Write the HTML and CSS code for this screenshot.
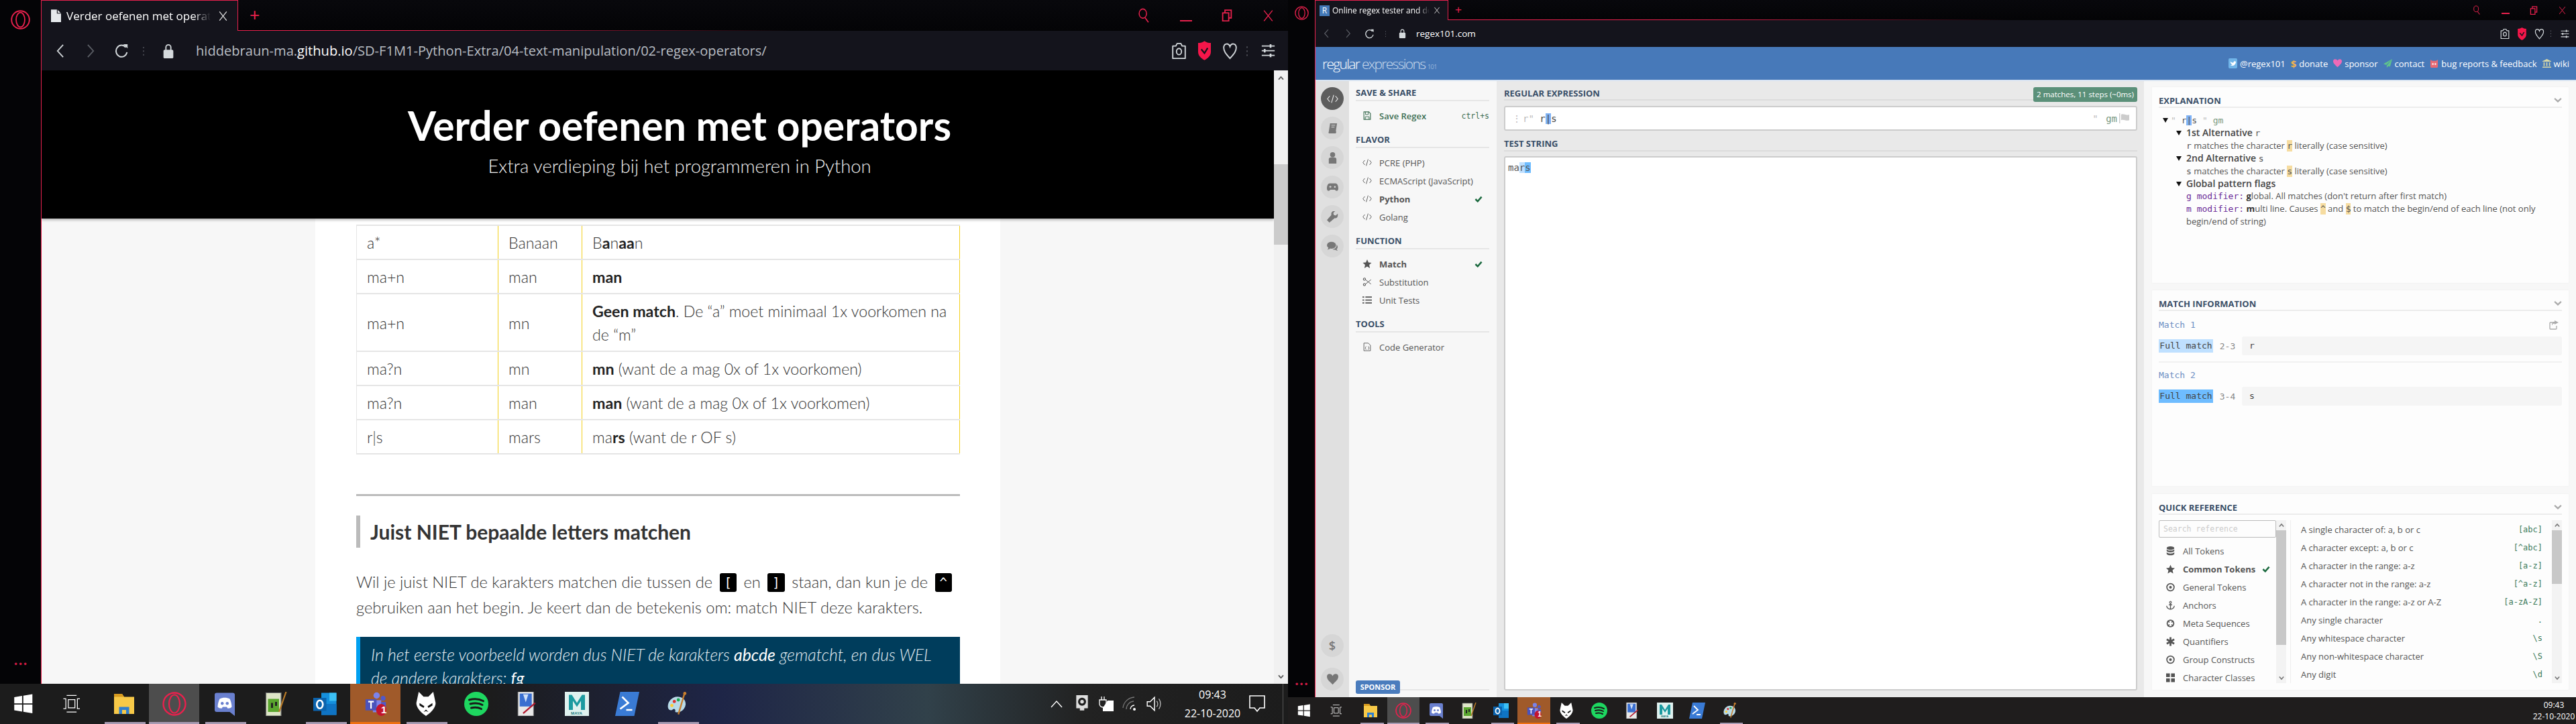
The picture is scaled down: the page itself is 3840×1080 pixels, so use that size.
FILE: index.html
```html
<!DOCTYPE html>
<html lang="en">
<head>
    <meta charset="UTF-8">
    <title>Two browser windows</title>
    <link rel="stylesheet" href="styles.css">
</head>
<body>
    <svg class="sprite" width="0" height="0">
        <symbol id="opera" viewBox="0 0 36 36"><ellipse cx="18" cy="18" rx="16.5" ry="16.5" fill="none" stroke="currentColor" stroke-width="2.4"/><ellipse cx="18" cy="18" rx="8" ry="13.5" fill="none" stroke="currentColor" stroke-width="2.2"/></symbol>
        <symbol id="doc" viewBox="0 0 16 20"><path d="M0 0h10l6 6v14H0z" fill="currentColor"/><path d="M10 0v6h6" fill="none" stroke="#14141c" stroke-width="1.2"/></symbol>
        <symbol id="back" viewBox="0 0 14 24"><path d="M12 2 3 12l9 10" fill="none" stroke="currentColor" stroke-width="2"/></symbol>
        <symbol id="forward" viewBox="0 0 14 24"><path d="m2 2 9 10-9 10" fill="none" stroke="currentColor" stroke-width="2"/></symbol>
        <symbol id="reload" viewBox="0 0 22 24"><path d="M17 6a9 9.500 0 1 0 2 8" fill="none" stroke="currentColor" stroke-width="2.200"/><path d="M13 1h7v7z" fill="currentColor"/></symbol>
        <symbol id="vdots" viewBox="0 0 4 24"><path d="M2 3v3M2 11v3M2 19v3" stroke="currentColor" stroke-width="2"/></symbol>
        <symbol id="lock" viewBox="0 0 16 24"><path d="M4 11V6a4 4 0 0 1 8 0v5" fill="none" stroke="currentColor" stroke-width="2"/><rect x="0" y="10" width="16" height="14" rx="2" fill="currentColor"/></symbol>
        <symbol id="camera" viewBox="0 0 24 28"><path d="M2 6h5l2-4h6l2 4h5v20H2z" fill="none" stroke="currentColor" stroke-width="2" stroke-linejoin="round"/><ellipse cx="12" cy="15" rx="4" ry="5" fill="none" stroke="currentColor" stroke-width="2"/></symbol>
        <symbol id="shield" viewBox="0 0 20 30"><path d="M10 0c3 2 6 3 10 3v14c0 6-5 10-10 13C5 27 0 23 0 17V3c4 0 7-1 10-3z" fill="#f5164a"/><path d="m5 13 5 6 5-8" fill="none" stroke="#14141c" stroke-width="2.400"/></symbol>
        <symbol id="heart" viewBox="0 0 24 28"><path d="M12 26C6 19 2 15 2 9c0-8 8-8 10-2 2-6 10-6 10 2 0 6-4 10-10 17z" fill="none" stroke="currentColor" stroke-width="2"/></symbol>
        <symbol id="sliders" viewBox="0 0 24 24"><path d="M1 4h22M1 12h22M1 20h22" stroke="currentColor" stroke-width="2"/><path d="M16 1v6M6 9v6M16 17v6" stroke="currentColor" stroke-width="3"/></symbol>
        <symbol id="search" viewBox="0 0 24 32"><ellipse cx="10" cy="12" rx="8" ry="10" fill="none" stroke="currentColor" stroke-width="2.200"/><path d="m15 21 7 10" stroke="currentColor" stroke-width="2.400"/></symbol>
        <symbol id="restore" viewBox="0 0 20 24"><rect x="1.500" y="7" width="12" height="16" fill="none" stroke="currentColor" stroke-width="2.400"/><path d="M6 7V1.500h12.500V17H14" fill="none" stroke="currentColor" stroke-width="2.400"/></symbol>
        <symbol id="close" viewBox="0 0 20 24"><path d="m2 2 16 20M18 2 2 22" stroke="currentColor" stroke-width="1.800"/></symbol>

        <symbol id="t-win" viewBox="0 0 24 24"><path d="M1 4 10.500 2.500v9H1zM12 2.300 23 .5v11H12zM1 13h9.500v8.500L1 20zM12 13h11v10.500l-11-1.800z" fill="#fff"/></symbol>
        <symbol id="t-view" viewBox="0 0 24 24"><path d="M6 2h12M6 22h12M2 6h3v12H2M22 6h-3v12h3M8 7h8v10H8z" fill="none" stroke="#fff" stroke-width="1"/></symbol>
        <symbol id="t-folder" viewBox="0 0 24 24"><path d="M2 2h8l2 3h10v17H2z" fill="#f7c948"/><path d="M2 2h8l2 3H2z" fill="#d69a1f"/><path d="M7 22v-7h10v7h-3v-4h-4v4z" fill="#2f7fd0"/></symbol>
        <symbol id="t-discord" viewBox="0 0 24 24"><path d="M4 1h16a2 2 0 0 1 2 2v21l-5-4H4a2 2 0 0 1-2-2V3a2 2 0 0 1 2-2z" fill="#6a80cf"/><path d="M7 7c3-1.500 7-1.500 10 0 1 2 2 5 2 8-1 1-2 1.500-4 1.500l-1-1.500h-4l-1 1.500c-2 0-3-.5-4-1.500 0-3 1-6 2-8z" fill="#fff"/><circle cx="9.500" cy="11.500" r="1.500" fill="#6a80cf"/><circle cx="14.500" cy="11.500" r="1.500" fill="#6a80cf"/></symbol>
        <symbol id="t-notepad" viewBox="0 0 24 24"><path d="M3 1h15v23H3z" fill="#dfe6c8" stroke="#777" stroke-width=".8"/><path d="M5 7h11v13H5z" fill="#5aa62e"/><path d="M8 11h2v5H8zM12 10h2v4h-2z" fill="#222"/><path d="m23 0-7 20" stroke="#b77a28" stroke-width="1.500"/></symbol>
        <symbol id="t-outlook" viewBox="0 0 24 24"><path d="M8 1h15v22H8z" fill="#1590dd"/><path d="M16 1h7v8h-7z" fill="#3cc0f5"/><path d="M8 12h15v11H8z" fill="#0f74c4"/><path d="M0 6h13v13H0z" fill="#0b63ad"/><ellipse cx="6.500" cy="12.500" rx="3" ry="4" fill="none" stroke="#fff" stroke-width="1.800"/></symbol>
        <symbol id="t-teams" viewBox="0 0 24 26"><circle cx="13" cy="4" r="3.400" fill="#7b83eb"/><circle cx="20" cy="7" r="2.600" fill="#5059c9"/><path d="M9 9h9v13H9z" fill="#7b83eb"/><path d="M18 11h5v8h-5z" fill="#5059c9"/><path d="M1 8h12v12H1z" fill="#4b53bc"/><path d="M4 10.500h6M7 10.500V18" stroke="#fff" stroke-width="1.600"/><ellipse cx="18" cy="19.500" rx="5.500" ry="6.500" fill="#c4142d"/></symbol>
        <symbol id="t-alien" viewBox="0 0 24 30"><path d="M3 0 9 6h6l6-6 3 14c0 6-6 12-12 16C6 26 0 20 0 14z" fill="#fff"/><path d="m4 14 6 4-1 2-5-3zM20 14l-6 4 1 2 5-3zM9 25l3-3 3 3-3-1z" fill="#111"/></symbol>
        <symbol id="t-spotify" viewBox="0 0 24 24"><circle cx="12" cy="12" r="12" fill="#1ed760"/><path d="M5 8c5-1.500 10-1 14 1.200M6 12c4-1 9-.8 12 1M7 16c3-.8 7-.6 10 1" fill="none" stroke="#1a1a1a" stroke-width="2" stroke-linecap="round"/></symbol>
        <symbol id="t-paint" viewBox="0 0 24 28"><path d="M2 0h18v28H2z" fill="#e8e8e8" stroke="#888" stroke-width=".6"/><path d="M4 2h14v15H4z" fill="#3a6fd0"/><path d="M8 3h6l-3 9z" fill="#cfe0f8"/><path d="M22 13 8 25" stroke="#b1182e" stroke-width="1.800"/></symbol>
        <symbol id="t-maya" viewBox="0 0 24 24"><path d="M0 0h24v24H0z" fill="#dff1ef"/><path d="M4 18V3h3l5 8 5-8h3v15h-4V9l-4 6-4-6v9z" fill="#1c9aa0"/></symbol>
        <symbol id="t-ps" viewBox="0 0 24 24"><path d="M5 0h19l-5 24H0z" fill="#3a7bd5"/><path d="m7 5 6 6-8 6M11 18h6" fill="none" stroke="#fff" stroke-width="1.800"/></symbol>
        <symbol id="t-palette" viewBox="0 0 24 30"><path d="M12 6C5 6 0 12 0 18c0 5 4 6 6 4 2-2 4 0 3 3 5 2 12-2 13-9 .5-6-4-10-10-10z" fill="#b9dbe8"/><circle cx="8" cy="12" r="2" fill="#d33"/><circle cx="13" cy="10" r="2" fill="#2a5"/><circle cx="5" cy="17" r="2" fill="#fc3"/><path d="M21 1 13 28" stroke="#c77f2f" stroke-width="2"/><circle cx="21" cy="2" r="2" fill="#c77f2f"/></symbol>

        <symbol id="i-code" viewBox="0 0 20 16"><path d="M5 3 1 8l4 5M15 3l4 5-4 5M12 1 8 15" fill="none" stroke="currentColor" stroke-width="1.300"/></symbol>
        <symbol id="i-book" viewBox="0 0 16 18"><path d="M4 1h11l-2 13H2zM2 14c-1 2 0 3 1 3h10l1-3" fill="currentColor"/><path d="M6 4h6M6 7h5" stroke="#ddd" stroke-width="1"/></symbol>
        <symbol id="i-user" viewBox="0 0 16 18"><circle cx="8" cy="4" r="4" fill="currentColor"/><path d="M2 18V11c0-2 2-3 6-3s6 1 6 3v7z" fill="currentColor"/></symbol>
        <symbol id="i-game" viewBox="0 0 20 14"><path d="M5 0h10c3 0 5 4 5 9 0 5-4 5-6 2H6c-2 3-6 3-6-2 0-5 2-9 5-9z" fill="currentColor"/><path d="M4 6h4M6 4v4" stroke="#ddd" stroke-width="1.200"/><circle cx="14" cy="6" r="1.500" fill="#ddd"/></symbol>
        <symbol id="i-wrench" viewBox="0 0 18 18"><path d="M17 4l-3 3-3-1-1-3 3-3c-4-1-7 2-6 6L0 14l4 4 8-7c4 1 6-3 5-7z" fill="currentColor"/></symbol>
        <symbol id="i-chat" viewBox="0 0 20 18"><ellipse cx="8" cy="7" rx="8" ry="6" fill="currentColor"/><path d="m3 11-2 4 5-2z" fill="currentColor"/><path d="M17 6c3 3 2 6 0 8l2 3-5-2c-2 0-3 0-4-1 3 0 8-3 7-8z" fill="currentColor"/></symbol>
        <symbol id="i-heart" viewBox="0 0 20 20"><path d="M10 19C4 13 0 10 0 5c0-6 8-6 10-1 2-5 10-5 10 1 0 5-4 8-10 14z" fill="currentColor"/></symbol>
        <symbol id="i-save" viewBox="0 0 14 16"><path d="M1 1h9l3 3v11H1z" fill="none" stroke="currentColor" stroke-width="1.400"/><path d="M4 1v5h5V1M3.500 15V10h7v5" fill="none" stroke="currentColor" stroke-width="1.200"/></symbol>
        <symbol id="i-check" viewBox="0 0 14 12"><path d="m1.500 6 4 4 7-8" fill="none" stroke="currentColor" stroke-width="3"/></symbol>
        <symbol id="i-star" viewBox="0 0 16 16"><path d="m8 0 2.400 5.400 5.600.6-4.200 3.800L13 16l-5-3-5 3 1.200-6.200L0 6l5.600-.6z" fill="currentColor"/></symbol>
        <symbol id="i-scissors" viewBox="0 0 16 16"><circle cx="3" cy="3" r="2" fill="none" stroke="currentColor" stroke-width="1.300"/><circle cx="3" cy="13" r="2" fill="none" stroke="currentColor" stroke-width="1.300"/><path d="m5 4 10 8M5 12l10-8" stroke="currentColor" stroke-width="1.200"/></symbol>
        <symbol id="i-list" viewBox="0 0 16 14"><path d="M5 2h11M5 7h11M5 12h11" stroke="currentColor" stroke-width="2"/><path d="M0 1h3v2H0zM0 6h3v2H0zM0 11h3v2H0z" fill="currentColor"/></symbol>
        <symbol id="i-file" viewBox="0 0 14 16"><path d="M1 1h8l4 4v10H1z" fill="none" stroke="currentColor" stroke-width="1.100"/><path d="M5 7 3.500 10 5 13M9 7l1.500 3L9 13" fill="none" stroke="currentColor"/></symbol>
        <symbol id="i-chevron" viewBox="0 0 16 10"><path d="m1.500 1.500 6.500 6 6.500-6" fill="none" stroke="currentColor" stroke-width="3"/></symbol>
        <symbol id="i-up" viewBox="0 0 10 8"><path d="M1 6.500 5 2l4 4.500" fill="none" stroke="currentColor" stroke-width="2"/></symbol>
        <symbol id="i-down" viewBox="0 0 10 8"><path d="M1 1.500 5 6l4-4.500" fill="none" stroke="currentColor" stroke-width="2"/></symbol>
        <symbol id="i-flag" viewBox="0 0 16 16"><path d="M0 0h1.500v16H0z" fill="currentColor"/><path d="M3 2c4-2 8 2 13 0v9c-5 2-9-2-13 0z" fill="currentColor"/></symbol>
        <symbol id="i-share" viewBox="0 0 14 14"><path d="M9 3H2a1 1 0 0 0-1 1v8a1 1 0 0 0 1 1h8a1 1 0 0 0 1-1V8" fill="none" stroke="currentColor" stroke-width="1.300"/><path d="M8 0l6 3-6 3V4.500c-2 0-3 1-4 3 0-4 2-5.500 4-5.500z" fill="currentColor"/></symbol>
        <symbol id="i-db" viewBox="0 0 14 16"><ellipse cx="7" cy="3" rx="6.500" ry="3" fill="currentColor"/><path d="M.5 5c2 3 11 3 13 0v3c-2 3-11 3-13 0zM.5 10c2 3 11 3 13 0v3c-2 3-11 3-13 0z" fill="currentColor"/></symbol>
        <symbol id="i-target" viewBox="0 0 14 14"><circle cx="7" cy="7" r="5.800" fill="none" stroke="currentColor" stroke-width="1.800"/><circle cx="7" cy="7" r="2.200" fill="currentColor"/></symbol>
        <symbol id="i-anchor" viewBox="0 0 16 16"><circle cx="8" cy="2.500" r="1.700" fill="none" stroke="currentColor" stroke-width="1.300"/><path d="M8 4v11M5 7h6M1 9c0 4 4 6 7 6s7-2 7-6" fill="none" stroke="currentColor" stroke-width="1.700"/></symbol>
        <symbol id="i-ring" viewBox="0 0 16 16"><circle cx="8" cy="8" r="6" fill="none" stroke="currentColor" stroke-width="2.200"/><path d="M3 3l3 3M13 3l-3 3M3 13l3-3M13 13l-3-3" stroke="currentColor" stroke-width="2.200"/></symbol>
        <symbol id="i-asterisk" viewBox="0 0 14 14"><path d="M7 0v14M1 3.500l12 7M13 3.500l-12 7" stroke="currentColor" stroke-width="3"/></symbol>
        <symbol id="i-grid" viewBox="0 0 14 14"><path d="M0 0h6v6H0zM8 0h6v6H8zM0 8h6v6H0zM8 8h6v6H8z" fill="currentColor"/></symbol>
        <symbol id="i-twitter" viewBox="0 0 14 16"><rect width="14" height="16" rx="2" fill="#70b4e8"/><path d="M3 5c2 2 4 2 5 2 0-3 3-3 4-1-1 5-5 7-9 5 2 0 3-1 3-1-2-1-3-3-3-5z" fill="#fff"/></symbol>
        <symbol id="i-plane" viewBox="0 0 16 16"><path d="M16 0 0 9l5 2zM16 0 6 12v4l3-3 3 1z" fill="#5fc48c"/></symbol>
        <symbol id="i-bug" viewBox="0 0 14 14"><path d="M1 1l3 2h6l3-2v11a2 2 0 0 1-2 2H3a2 2 0 0 1-2-2z" fill="#e96a73"/><circle cx="5" cy="8" r="1.300" fill="#fff"/><circle cx="9" cy="8" r="1.300" fill="#fff"/></symbol>
        <symbol id="i-bank" viewBox="0 0 16 16"><path d="M8 0l8 4v1H0V4zM0 14h16v2H0zM2 6h2v7H2zM7 6h2v7H7zM12 6h2v7h-2z" fill="#d8d8a6"/></symbol>
        <symbol id="i-tray" viewBox="0 0 18 24"><path d="M1 0h16v18H1zM6 18v3h6v-3M4 23h10" fill="#ddd"/><circle cx="9" cy="9" r="5.500" fill="#1e1e1e"/><circle cx="9" cy="9" r="2.500" fill="#ddd"/></symbol>
        <symbol id="i-battery" viewBox="0 0 24 24"><path d="M5 1v5M9 1v5M2 6h10v6a5 5 0 0 1-10 0z" fill="none" stroke="#fff" stroke-width="1.300"/><path d="M7 18v5h16V7h-9" fill="#fff"/></symbol>
        <symbol id="i-wifi" viewBox="0 0 24 24"><path d="M1 18a18 18 0 0 1 17-16M6 20a12 12 0 0 1 11-12" fill="none" stroke="#777" stroke-width="1.300"/><path d="M12 20a6 6 0 0 1 6-6" fill="none" stroke="#fff" stroke-width="1.300"/><circle cx="18" cy="20" r="2" fill="#fff"/></symbol>
        <symbol id="i-speaker" viewBox="0 0 22 24"><path d="M1 9h4l6-6v18l-6-6H1z" fill="none" stroke="#fff" stroke-width="1.300"/><path d="M14 8c2 2 2 6 0 8M17 5c3 4 3 10 0 14" fill="none" stroke="#bbb" stroke-width="1.200"/></symbol>
        <symbol id="i-note" viewBox="0 0 24 26"><path d="M1 1h22v18h-7l-4 5-4-5H1z" fill="none" stroke="#fff" stroke-width="1.600"/></symbol>
        <symbol id="i-caret" viewBox="0 0 18 12"><path d="m1 11 8-9 8 9" fill="none" stroke="#fff" stroke-width="1.400"/></symbol>
    </svg>

    <div class="desktop">
        <!-- left monitor -->
        <section class="monitor monitor-left">
            <div class="workspace">
                <aside class="opera-bar">
                    <svg class="opera-logo"><use href="#opera"/></svg>
                    <span class="opera-dots">•••</span>
                </aside>
                <div class="browser">
                    <div class="tabstrip">
                        <div class="tab">
                            <svg class="tab-doc"><use href="#doc"/></svg>
                            <span class="tab-title">Verder oefenen met operators</span>
                            <svg class="tab-close"><use href="#close"/></svg>
                        </div>
                        <span class="tab-plus">+</span>
                        <div class="win-controls">
                            <svg class="win-search"><use href="#search"/></svg>
                            <span class="win-min"></span>
                            <svg class="win-restore"><use href="#restore"/></svg>
                            <svg class="win-close"><use href="#close"/></svg>
                        </div>
                    </div>
                    <div class="toolbar">
                        <svg class="nav nav-back"><use href="#back"/></svg>
                        <svg class="nav nav-fwd"><use href="#forward"/></svg>
                        <svg class="nav nav-reload"><use href="#reload"/></svg>
                        <svg class="nav nav-dots"><use href="#vdots"/></svg>
                        <svg class="nav nav-lock"><use href="#lock"/></svg>
                        <span class="url">hiddebraun-ma.<b>github.io</b>/SD-F1M1-Python-Extra/04-text-manipulation/02-regex-operators/</span>
                        <div class="tools">
                            <svg class="tool-camera"><use href="#camera"/></svg>
                            <svg class="tool-shield"><use href="#shield"/></svg>
                            <svg class="tool-heart"><use href="#heart"/></svg>
                            <svg class="tool-dots"><use href="#vdots"/></svg>
                            <svg class="tool-sliders"><use href="#sliders"/></svg>
                        </div>
                    </div>
                    <div class="page">
                        <div class="site">
                            <header class="hero">
                                <h1>Verder oefenen met operators</h1>
                                <p>Extra verdieping bij het programmeren in Python</p>
                            </header>
                            <div class="site-body">
                                <article class="article">
                                    <table class="ops">
                                        <tr><td>a*</td><td>Banaan</td><td>B<b>a</b>n<b>aa</b>n</td></tr>
                                        <tr><td>ma+n</td><td>man</td><td><b>man</b></td></tr>
                                        <tr><td>ma+n</td><td>mn</td><td><b>Geen match</b>. De “a” moet minimaal 1x voorkomen na<br>de “m”</td></tr>
                                        <tr><td>ma?n</td><td>mn</td><td><b>mn</b> (want de a mag 0x of 1x voorkomen)</td></tr>
                                        <tr><td>ma?n</td><td>man</td><td><b>man</b> (want de a mag 0x of 1x voorkomen)</td></tr>
                                        <tr><td>r|s</td><td>mars</td><td>ma<b>rs</b> (want de r OF s)</td></tr>
                                    </table>
                                    <hr class="rule">
                                    <h2>Juist NIET bepaalde letters matchen</h2>
                                    <p class="para">Wil je juist NIET de karakters matchen die tussen de <code>[</code> en <code>]</code> staan, dan kun je de <code>^</code><br>gebruiken aan het begin. Je keert dan de betekenis om: match NIET deze karakters.</p>
                                    <div class="callout">In het eerste voorbeeld worden dus NIET de karakters <b>abcde</b> gematcht, en dus WEL de andere karakters: <b>fg</b></div>
                                </article>
                            </div>
                        </div>
                        <div class="scrollbar">
                            <svg class="sb-arrow"><use href="#i-up"/></svg>
                            <span class="sb-thumb"></span>
                            <svg class="sb-arrow sb-arrow-end"><use href="#i-down"/></svg>
                        </div>
                    </div>
                </div>
            </div>
            <footer class="taskbar">
                <div class="tb-start"><svg class="tb-icon"><use href="#t-win"/></svg></div>
                <div class="tb-view"><svg class="tb-icon"><use href="#t-view"/></svg></div>
                <div class="tb-item open"><svg class="tb-icon"><use href="#t-folder"/></svg></div>
                <div class="tb-item open current"><svg class="tb-icon tb-opera"><use href="#opera"/></svg></div>
                <div class="tb-item open"><svg class="tb-icon"><use href="#t-discord"/></svg></div>
                <div class="tb-item"><svg class="tb-icon"><use href="#t-notepad"/></svg></div>
                <div class="tb-item open"><svg class="tb-icon"><use href="#t-outlook"/></svg></div>
                <div class="tb-item flash"><svg class="tb-icon"><use href="#t-teams"/></svg><span class="tb-badge">1</span></div>
                <div class="tb-item open"><svg class="tb-icon"><use href="#t-alien"/></svg></div>
                <div class="tb-item"><svg class="tb-icon"><use href="#t-spotify"/></svg></div>
                <div class="tb-item"><svg class="tb-icon"><use href="#t-paint"/></svg></div>
                <div class="tb-item"><svg class="tb-icon"><use href="#t-maya"/></svg><span class="tb-maya">MAYA</span></div>
                <div class="tb-item"><svg class="tb-icon"><use href="#t-ps"/></svg></div>
                <div class="tb-item open"><svg class="tb-icon"><use href="#t-palette"/></svg></div>
                <div class="tray">
                    <svg class="tray-caret"><use href="#i-caret"/></svg>
                    <svg class="tray-icon"><use href="#i-tray"/></svg>
                    <svg class="tray-icon"><use href="#i-battery"/></svg>
                    <svg class="tray-icon"><use href="#i-wifi"/></svg>
                    <svg class="tray-icon"><use href="#i-speaker"/></svg>
                    <div class="clock"><span>09:43</span><span>22-10-2020</span></div>
                    <svg class="tray-note"><use href="#i-note"/></svg>
                    <span class="tray-edge"></span>
                </div>
            </footer>
        </section>

        <!-- right monitor -->
        <section class="monitor monitor-right">
            <div class="workspace">
                <aside class="opera-bar">
                    <svg class="opera-logo"><use href="#opera"/></svg>
                    <span class="opera-dots">•••</span>
                </aside>
                <div class="browser">
                    <div class="tabstrip">
                        <div class="tab">
                            <span class="tab-fav">R</span>
                            <span class="tab-title">Online regex tester and debugger</span>
                            <svg class="tab-close"><use href="#close"/></svg>
                        </div>
                        <span class="tab-plus">+</span>
                        <div class="win-controls">
                            <svg class="win-search"><use href="#search"/></svg>
                            <span class="win-min"></span>
                            <svg class="win-restore"><use href="#restore"/></svg>
                            <svg class="win-close"><use href="#close"/></svg>
                        </div>
                    </div>
                    <div class="toolbar">
                        <svg class="nav nav-back"><use href="#back"/></svg>
                        <svg class="nav nav-fwd"><use href="#forward"/></svg>
                        <svg class="nav nav-reload"><use href="#reload"/></svg>
                        <svg class="nav nav-dots"><use href="#vdots"/></svg>
                        <svg class="nav nav-lock"><use href="#lock"/></svg>
                        <span class="url">regex101.com</span>
                        <div class="tools">
                            <svg class="tool-camera"><use href="#camera"/></svg>
                            <svg class="tool-shield"><use href="#shield"/></svg>
                            <svg class="tool-heart"><use href="#heart"/></svg>
                            <svg class="tool-dots"><use href="#vdots"/></svg>
                            <svg class="tool-sliders"><use href="#sliders"/></svg>
                        </div>
                    </div>
                    <header class="rx-header">
                        <div class="rx-logo"><b>regular</b> expressions <small>101</small></div>
                        <nav class="rx-nav">
                            <a><svg class="rx-nav-icon"><use href="#i-twitter"/></svg>@regex101</a>
                            <a><span class="rx-dollar">$</span>donate</a>
                            <a><svg class="rx-nav-icon rx-pink"><use href="#i-heart"/></svg>sponsor</a>
                            <a><svg class="rx-nav-icon"><use href="#i-plane"/></svg>contact</a>
                            <a><svg class="rx-nav-icon"><use href="#i-bug"/></svg>bug reports &amp; feedback</a>
                            <a><svg class="rx-nav-icon"><use href="#i-bank"/></svg>wiki</a>
                        </nav>
                    </header>
                    <div class="rx-body">
                        <div class="rx-rail">
                            <span class="pill active"><svg><use href="#i-code"/></svg></span>
                            <span class="pill"><svg><use href="#i-book"/></svg></span>
                            <span class="pill"><svg><use href="#i-user"/></svg></span>
                            <span class="pill"><svg><use href="#i-game"/></svg></span>
                            <span class="pill"><svg><use href="#i-wrench"/></svg></span>
                            <span class="pill"><svg><use href="#i-chat"/></svg></span>
                            <span class="pill pill-dollar">$</span>
                            <span class="pill"><svg><use href="#i-heart"/></svg></span>
                        </div>
                        <div class="rx-side">
                            <h3>Save &amp; Share</h3>
                            <div class="side-item save"><svg><use href="#i-save"/></svg><span>Save Regex</span><kbd>ctrl+s</kbd></div>
                            <h3>Flavor</h3>
                            <div class="side-item"><svg><use href="#i-code"/></svg><span>PCRE (PHP)</span></div>
                            <div class="side-item"><svg><use href="#i-code"/></svg><span>ECMAScript (JavaScript)</span></div>
                            <div class="side-item picked"><svg><use href="#i-code"/></svg><span>Python</span><svg class="check"><use href="#i-check"/></svg></div>
                            <div class="side-item"><svg><use href="#i-code"/></svg><span>Golang</span></div>
                            <h3>Function</h3>
                            <div class="side-item picked"><svg><use href="#i-star"/></svg><span>Match</span><svg class="check"><use href="#i-check"/></svg></div>
                            <div class="side-item"><svg><use href="#i-scissors"/></svg><span>Substitution</span></div>
                            <div class="side-item"><svg><use href="#i-list"/></svg><span>Unit Tests</span></div>
                            <h3>Tools</h3>
                            <div class="side-item"><svg><use href="#i-file"/></svg><span>Code Generator</span></div>
                            <div class="sponsor-line"><span class="sponsor">SPONSOR</span></div>
                        </div>
                        <main class="rx-main">
                            <div class="main-head"><h3>Regular Expression</h3><span class="steps">2 matches, 11 steps (~0ms)</span></div>
                            <div class="regex-box">
                                <span class="rx-delim">⋮</span><span class="rx-pre">r"</span><span class="rx-src">&nbsp;r<i class="pipe">|</i>s</span>
                                <span class="rx-flags"><em>"</em> gm<svg><use href="#i-flag"/></svg></span>
                            </div>
                            <h3 class="test-head">Test String</h3>
                            <div class="test-box">ma<span class="m1">r</span><span class="m2">s</span></div>
                        </main>
                        <div class="rx-right">
                            <section class="card card-expl">
                                <div class="card-head"><h3>Explanation</h3><svg><use href="#i-chevron"/></svg></div>
                                <div class="tree">
                                    <div class="t-root"><i class="tri"></i><span class="mono"><em>"</em> r<i class="pipe">|</i>s <em>"</em> <u>gm</u></span></div>
                                    <div class="t-a"><i class="tri"></i><b>1st Alternative</b> <span class="mono">r</span></div>
                                    <div class="t-b"><span class="mono">r</span> matches the character <mark class="mono">r</mark> literally (case sensitive)</div>
                                    <div class="t-a"><i class="tri"></i><b>2nd Alternative</b> <span class="mono">s</span></div>
                                    <div class="t-b"><span class="mono">s</span> matches the character <mark class="mono">s</mark> literally (case sensitive)</div>
                                    <div class="t-a"><i class="tri"></i><b>Global pattern flags</b></div>
                                    <div class="t-b"><span class="mono flag">g modifier:</span> <b class="first">g</b>lobal. All matches (don't return after first match)</div>
                                    <div class="t-b"><span class="mono flag">m modifier:</span> <b class="first">m</b>ulti line. Causes <mark class="mono">^</mark> and <mark class="mono">$</mark> to match the begin/end of each line (not only begin/end of string)</div>
                                </div>
                            </section>
                            <section class="card card-match">
                                <div class="card-head"><h3>Match Information</h3><svg><use href="#i-chevron"/></svg></div>
                                <div class="match">
                                    <div class="match-title">Match 1<svg><use href="#i-share"/></svg></div>
                                    <div class="match-row"><span class="m-label m1">Full match</span><span class="m-pos">2-3</span><span class="m-val">r</span></div>
                                </div>
                                <div class="match">
                                    <div class="match-title">Match 2</div>
                                    <div class="match-row"><span class="m-label m2">Full match</span><span class="m-pos">3-4</span><span class="m-val">s</span></div>
                                </div>
                            </section>
                            <section class="card card-quick">
                                <div class="card-head"><h3>Quick Reference</h3><svg><use href="#i-chevron"/></svg></div>
                                <div class="quick">
                                    <div class="quick-cats">
                                        <div class="quick-search">Search reference</div>
                                        <div class="cat"><svg><use href="#i-db"/></svg>All Tokens</div>
                                        <div class="cat picked"><svg><use href="#i-star"/></svg>Common Tokens<svg class="check"><use href="#i-check"/></svg></div>
                                        <div class="cat"><svg><use href="#i-target"/></svg>General Tokens</div>
                                        <div class="cat"><svg><use href="#i-anchor"/></svg>Anchors</div>
                                        <div class="cat"><svg><use href="#i-ring"/></svg>Meta Sequences</div>
                                        <div class="cat"><svg><use href="#i-asterisk"/></svg>Quantifiers</div>
                                        <div class="cat"><svg><use href="#i-target"/></svg>Group Constructs</div>
                                        <div class="cat"><svg><use href="#i-grid"/></svg>Character Classes</div>
                                    </div>
                                    <div class="mini-bar mini-cats"><svg><use href="#i-up"/></svg><span></span><svg class="end"><use href="#i-down"/></svg></div>
                                    <div class="quick-list">
                                        <div class="ref"><span>A single character of: a, b or c</span><code>[abc]</code></div>
                                        <div class="ref"><span>A character except: a, b or c</span><code>[^abc]</code></div>
                                        <div class="ref"><span>A character in the range: a-z</span><code>[a-z]</code></div>
                                        <div class="ref"><span>A character not in the range: a-z</span><code>[^a-z]</code></div>
                                        <div class="ref"><span>A character in the range: a-z or A-Z</span><code>[a-zA-Z]</code></div>
                                        <div class="ref"><span>Any single character</span><code>.</code></div>
                                        <div class="ref"><span>Any whitespace character</span><code>\s</code></div>
                                        <div class="ref"><span>Any non-whitespace character</span><code>\S</code></div>
                                        <div class="ref"><span>Any digit</span><code>\d</code></div>
                                    </div>
                                    <div class="mini-bar mini-list"><svg><use href="#i-up"/></svg><span></span><svg class="end"><use href="#i-down"/></svg></div>
                                </div>
                            </section>
                        </div>
                    </div>
                </div>
            </div>
            <footer class="taskbar">
                <div class="tb-start"><svg class="tb-icon"><use href="#t-win"/></svg></div>
                <div class="tb-view"><svg class="tb-icon"><use href="#t-view"/></svg></div>
                <div class="tb-item open"><svg class="tb-icon"><use href="#t-folder"/></svg></div>
                <div class="tb-item open current"><svg class="tb-icon tb-opera"><use href="#opera"/></svg></div>
                <div class="tb-item open"><svg class="tb-icon"><use href="#t-discord"/></svg></div>
                <div class="tb-item"><svg class="tb-icon"><use href="#t-notepad"/></svg></div>
                <div class="tb-item open"><svg class="tb-icon"><use href="#t-outlook"/></svg></div>
                <div class="tb-item flash"><svg class="tb-icon"><use href="#t-teams"/></svg><span class="tb-badge">1</span></div>
                <div class="tb-item open"><svg class="tb-icon"><use href="#t-alien"/></svg></div>
                <div class="tb-item"><svg class="tb-icon"><use href="#t-spotify"/></svg></div>
                <div class="tb-item"><svg class="tb-icon"><use href="#t-paint"/></svg></div>
                <div class="tb-item"><svg class="tb-icon"><use href="#t-maya"/></svg><span class="tb-maya">MAYA</span></div>
                <div class="tb-item"><svg class="tb-icon"><use href="#t-ps"/></svg></div>
                <div class="tb-item open"><svg class="tb-icon"><use href="#t-palette"/></svg></div>
                <div class="tray">
                    <div class="clock"><span>09:43</span><span>22-10-2020</span></div>
                </div>
            </footer>
        </section>
    </div>
</body>
</html>
```
FILE: styles.css
```css
* {
    box-sizing: border-box;
}
body {
    margin: 0;
    width: 3840px;
    height: 1080px;
    overflow: hidden;
    background: #000;
    font-family: "Open Sans", sans-serif;
}
.sprite {
    position: absolute;
}
svg {
    display: block;
    flex: none;
}
.desktop {
    display: flex;
    height: 1080px;
}
.monitor {
    width: 1920px;
    height: 1080px;
    display: flex;
    flex-direction: column;
}
.workspace {
    flex: 1;
    min-height: 0;
    display: flex;
}

/* opera chrome */
.opera-bar {
    background: #040406;
    display: flex;
    flex-direction: column;
    align-items: center;
    justify-content: space-between;
    color: #e8214d;
    border-right: 1px solid #e8214d;
}
.monitor-left .opera-bar {
    width: 62px;
    padding: 15px 0 22px;
}
.monitor-right .opera-bar {
    width: 41px;
    padding: 9px 0 0;
}
.opera-logo {
    width: 29px;
    height: 29px;
}
.monitor-right .opera-logo {
    width: 21px;
    height: 21px;
}
.opera-dots {
    font-size: 12px;
    letter-spacing: 0;
    line-height: 14px;
    color: #d41c45;
    font-family: "DejaVu Sans", sans-serif;
}
.monitor-right .opera-dots {
    margin-bottom: 12px;
}
.browser {
    flex: 1;
    min-width: 0;
    display: flex;
    flex-direction: column;
}
.tabstrip {
    display: flex;
    align-items: center;
    color: #e8214d;
    background: linear-gradient(#08080c, #040406);
    position: relative;
    flex: none;
}
.monitor-left .tabstrip {
    height: 46px;
}
.monitor-right .tabstrip {
    height: 30px;
}
.tabstrip::after {
    content: "";
    position: absolute;
    left: 0;
    right: 0;
    bottom: 0;
    height: 1px;
    background: linear-gradient(90deg, #e8214d 30%, transparent 60%);
}
.monitor-right .tabstrip::after {
    background: linear-gradient(90deg, #e8214d 30%, transparent 55%);
}
.tab {
    height: 100%;
    display: flex;
    align-items: center;
    background: #14141c;
    border-top: 1px solid #e8214d;
    border-right: 1px solid #e8214d;
    color: #fff;
    position: relative;
    z-index: 1;
}
.monitor-left .tab {
    width: 293px;
    padding-left: 14px;
}
.monitor-right .tab {
    width: 198px;
    padding-left: 6px;
}
.tab-doc {
    width: 15px;
    height: 19px;
    color: #e6e9ec;
    margin-right: 8px;
}
.tab-fav {
    width: 15px;
    height: 16px;
    background: #4479b8;
    font-size: 12px;
    line-height: 16px;
    text-align: center;
    margin-right: 4px;
}
.tab-title {
    white-space: nowrap;
    overflow: hidden;
    -webkit-mask-image: linear-gradient(90deg, #000 88%, transparent);
    mask-image: linear-gradient(90deg, #000 88%, transparent);
}
.monitor-left .tab-title {
    width: 215px;
    font-size: 17px;
}
.monitor-right .tab-title {
    width: 145px;
    font-size: 12px;
}
.tab-close {
    color: #e8e8e8;
}
.monitor-left .tab-close {
    width: 15px;
    height: 16px;
    margin-left: 11px;
}
.monitor-right .tab-close {
    width: 10px;
    height: 11px;
    margin-left: 6px;
}
.tab-plus {
    font-family: "Liberation Sans", sans-serif;
    line-height: 1;
}
.monitor-left .tab-plus {
    font-size: 26px;
    margin-left: 17px;
    margin-top: -3px;
}
.monitor-right .tab-plus {
    font-size: 17px;
    margin-left: 10px;
    margin-top: -2px;
}
.win-controls {
    margin-left: auto;
    display: flex;
    align-items: center;
}
.win-search, .win-restore, .win-close, .win-min {
    flex: none;
}
.monitor-left .win-controls {
    gap: 43px;
    margin-right: 20px;
}
.monitor-right .win-controls {
    gap: 30px;
    margin-right: 14px;
}
.monitor-left .win-search {
    width: 22px;
    height: 22px;
}
.monitor-left .win-min {
    width: 18px;
    height: 2px;
    background: currentColor;
    margin-top: 16px;
}
.monitor-left .win-restore {
    width: 18px;
    height: 18px;
}
.monitor-left .win-close {
    width: 19px;
    height: 19px;
}
.monitor-right .win-search {
    width: 14px;
    height: 14px;
}
.monitor-right .win-min {
    width: 12px;
    height: 2px;
    background: currentColor;
    margin-top: 10px;
}
.monitor-right .win-restore {
    width: 12px;
    height: 13px;
}
.monitor-right .win-close {
    width: 13px;
    height: 13px;
}
.toolbar {
    background: #14141c;
    display: flex;
    align-items: center;
    color: #d5dadd;
    flex: none;
}
.monitor-left .toolbar {
    height: 59px;
}
.monitor-right .toolbar {
    height: 40px;
}
.nav-fwd, .nav-dots {
    color: #5c5f66;
}
.monitor-left .nav-back {
    width: 15px;
    height: 22px;
    margin-left: 20px;
}
.monitor-left .nav-fwd {
    width: 15px;
    height: 22px;
    margin-left: 31px;
}
.monitor-left .nav-reload {
    width: 20px;
    height: 22px;
    margin-left: 29px;
}
.monitor-left .nav-dots {
    width: 4px;
    height: 16px;
    margin-left: 20px;
}
.monitor-left .nav-lock {
    width: 16px;
    height: 22px;
    margin-left: 27px;
}
.monitor-left .url {
    margin-left: 33px;
    font-size: 20.100px;
}
.monitor-right .nav-back, .monitor-right .nav-fwd {
    width: 10px;
    height: 14px;
    color: #5c5f66;
}
.monitor-right .nav-back {
    margin-left: 11px;
}
.monitor-right .nav-fwd {
    margin-left: 23px;
}
.monitor-right .nav-reload {
    width: 14px;
    height: 15px;
    margin-left: 20px;
}
.monitor-right .nav-dots {
    width: 3px;
    height: 11px;
    margin-left: 15px;
}
.monitor-right .nav-lock {
    width: 11px;
    height: 14px;
    margin-left: 18px;
}
.monitor-right .url {
    margin-left: 15px;
    font-size: 13.500px;
    color: #fff;
}
.url {
    color: #b9bec4;
    white-space: nowrap;
}
.url b {
    color: #fff;
    font-weight: 400;
}
.tools {
    margin-left: auto;
    display: flex;
    align-items: center;
}
.monitor-left .tools {
    margin-right: 19px;
}
.monitor-right .tools {
    margin-right: 10px;
}
.monitor-left .tool-camera { width: 23px; height: 26px; }
.monitor-left .tool-shield { width: 19px; height: 29px; margin-left: 17px; }
.monitor-left .tool-heart { width: 23px; height: 26px; margin-left: 17px; }
.monitor-left .tool-dots { width: 4px; height: 18px; margin-left: 12px; color: #5c5f66; }
.monitor-left .tool-sliders { width: 21px; height: 21px; margin-left: 19px; }
.monitor-right .tool-camera { width: 14px; height: 17px; }
.monitor-right .tool-shield { width: 13px; height: 19px; margin-left: 12px; }
.monitor-right .tool-heart { width: 15px; height: 17px; margin-left: 12px; }
.monitor-right .tool-dots { width: 3px; height: 12px; margin-left: 8px; color: #5c5f66; }
.monitor-right .tool-sliders { width: 13px; height: 13px; margin-left: 13px; }

/* left page */
.page {
    flex: 1;
    min-height: 0;
    display: flex;
}
.site {
    flex: 1;
    min-width: 0;
    display: flex;
    flex-direction: column;
    background: #f7f7f7;
    overflow: hidden;
}
.hero {
    flex: none;
    height: 221px;
    background: #000;
    color: #fff;
    text-align: center;
    padding: 46px 0 0 65px;
    font-family: Lato, sans-serif;
    box-shadow: 0 2px 4px rgba(0, 0, 0, 0.3);
    position: relative;
}
.hero h1 {
    margin: 0;
    font-size: 60.600px;
    line-height: 72px;
    font-weight: 700;
}
.hero p {
    margin: 8px 0 0;
    font-size: 27.400px;
    line-height: 34px;
    font-weight: 300;
    color: #f2f2f2;
}
.site-body {
    flex: 1;
    min-height: 0;
    padding-left: 408px;
}
.article {
    width: 1021px;
    height: 100%;
    background: #fff;
    padding: 9px 60px 0 61px;
    font-family: Lato, sans-serif;
    font-weight: 300;
    color: #333;
    overflow: hidden;
}
.ops {
    width: 900px;
    border-collapse: collapse;
    table-layout: fixed;
    font-size: 23.200px;
    line-height: 35px;
    border-top: 2px solid #e5e5e5;
}
.ops td {
    padding: 8px 15px 6px;
    border-bottom: 2px solid #e5e5e5;
    border-right: 1px solid #f3cf1c;
}
.ops td:first-child {
    width: 211px;
    border-left: 1px solid #e5e5e5;
}
.ops td:nth-child(2) {
    width: 125px;
}
.ops td:nth-child(3) {
    white-space: nowrap;
}
.ops b {
    font-weight: 700;
    color: #222;
}
.rule {
    height: 3px;
    border: 0;
    background: #bbb;
    margin: 59px 0 0;
}
.article h2 {
    margin: 29px 0 0;
    height: 48px;
    border-left: 6px solid #bbb;
    padding-left: 15px;
    font-size: 30px;
    line-height: 48px;
    font-weight: 700;
    color: #333;
    white-space: nowrap;
}
.para {
    margin: 32px 0 0;
    font-size: 23.700px;
    line-height: 38px;
    white-space: nowrap;
}
.para code {
    display: inline-block;
    background: #000;
    color: #fff;
    border-radius: 3px;
    height: 28px;
    padding: 0 7px;
    margin: 0 4px;
    line-height: 28px;
    font-size: 19px;
    vertical-align: 1px;
}
.callout {
    margin-top: 25px;
    background: #003d5c;
    border-left: 6px solid #00a0f0;
    padding: 9px 15px 15px 16px;
    color: #e6eef3;
    font-style: italic;
    font-size: 24.800px;
    line-height: 35px;
}
.callout b {
    color: #fff;
}
.scrollbar {
    width: 21px;
    background: #f1f1f1;
    flex: none;
    display: flex;
    flex-direction: column;
    align-items: center;
    color: #555;
    padding-top: 8px;
}
.sb-arrow {
    width: 9px;
    height: 7px;
}
.sb-thumb {
    align-self: stretch;
    height: 120px;
    margin-top: 125px;
    background: #cbcbcb;
}
.sb-arrow-end {
    margin-top: auto;
    margin-bottom: 7px;
}

/* taskbar */
.taskbar {
    display: flex;
    flex: none;
    position: relative;
    color: #fff;
}
.monitor-left .taskbar {
    height: 60px;
    background: linear-gradient(90deg, #1c1c1c 38%, #1e2547 56%, #31414a 72%, #222 84%, #1c1c1c);
    --step: 75px;
    --icon: 36px;
    --bar: 3px;
}
.monitor-right .taskbar {
    height: 40px;
    background: #1f1d1d;
    --step: 48.700px;
    --icon: 24px;
    --bar: 2px;
}
.tb-start, .tb-view, .tb-item {
    display: flex;
    align-items: center;
    justify-content: center;
    height: 100%;
    position: relative;
    flex: none;
}
.monitor-left .tb-start { width: 70px; }
.monitor-left .tb-view { width: 74px; margin-right: 3px; }
.monitor-right .tb-start { width: 48px; }
.monitor-right .tb-view { width: 48px; margin-right: 3px; }
.tb-start .tb-icon, .tb-view .tb-icon {
    width: calc(var(--icon) * 0.82);
    height: calc(var(--icon) * 0.82);
}
.tb-item {
    width: var(--step);
}
.tb-icon {
    width: var(--icon);
    height: var(--icon);
}
.tb-opera {
    color: #e8214d;
}
.tb-item.open::after {
    content: "";
    position: absolute;
    left: 9px;
    right: 5px;
    bottom: 0;
    height: var(--bar);
    background: #a79bb3;
}
.tb-item.current {
    background: #4d4d4d;
}
.tb-item.current::after {
    left: 0;
    right: 0;
}
.tb-item.flash {
    background: #a05a2a;
}
.tb-item.flash::after {
    content: "";
    position: absolute;
    left: 0;
    right: 0;
    bottom: 0;
    height: var(--bar);
    background: #f07010;
}
.tb-badge {
    position: absolute;
    left: 50%;
    top: 50%;
    width: calc(var(--icon) * 0.46);
    margin-left: calc(var(--icon) * 0.12);
    margin-top: calc(var(--icon) * 0.04);
    font-family: "Liberation Sans", sans-serif;
    font-size: calc(var(--icon) * 0.42);
    font-weight: 700;
    line-height: 1;
    text-align: center;
}
.tb-maya {
    position: absolute;
    left: 0;
    right: 0;
    top: 50%;
    margin-top: calc(var(--icon) * 0.3);
    font-family: "Liberation Sans", sans-serif;
    font-size: calc(var(--icon) * 0.17);
    font-weight: 700;
    line-height: 1;
    text-align: center;
    color: #1c7a80;
}
.tray {
    position: absolute;
    right: 0;
    top: 0;
    bottom: 0;
    display: flex;
    align-items: center;
}
.monitor-left .tray {
    width: 355px;
    padding-left: 1px;
}
.tray-caret { width: 18px; height: 12px; margin-right: 17px; }
.tray-icon { width: 24px; height: 26px; margin-right: 12px; }
.clock {
    display: flex;
    flex-direction: column;
    align-items: center;
    font-size: 16px;
    line-height: 28px;
}
.monitor-left .clock {
    width: 90px;
    margin-left: 20px;
}
.monitor-right .clock {
    font-size: 12px;
    line-height: 17px;
    width: 66px;
}
.tray-note { width: 24px; height: 26px; margin-left: 12px; margin-right: 34px; }
.tray-edge {
    position: absolute;
    right: 7px;
    top: 0;
    bottom: 0;
    width: 1px;
    background: #555;
}

/* regex101 */
.rx-header {
    flex: none;
    height: 49px;
    background: #4779b9;
    display: flex;
    align-items: center;
    padding: 0 10px;
    color: #fff;
    box-shadow: 0 2px 0 #d9e4f2;
    position: relative;
}
.rx-logo {
    font-size: 21px;
    font-weight: 300;
    letter-spacing: -1.700px;
    color: #c9d9ec;
}
.rx-logo b {
    color: #fff;
    font-weight: 300;
}
.rx-logo small {
    font-size: 9px;
    letter-spacing: -.5px;
}
.rx-nav {
    margin-left: auto;
    display: flex;
    gap: 8px;
    font-size: 13px;
}
.rx-nav a {
    display: flex;
    align-items: center;
    gap: 4px;
}
.rx-nav-icon {
    width: 13px;
    height: 15px;
}
.rx-pink {
    color: #ef6ab7;
}
.rx-dollar {
    color: #f1b34f;
    font-weight: 700;
    font-size: 15px;
}
.rx-body {
    flex: 1;
    min-height: 0;
    display: flex;
}
.rx-rail {
    width: 50px;
    background: #e0e0e0;
    display: flex;
    flex-direction: column;
    align-items: center;
    gap: 10px;
    padding: 11px 0 10px;
}
.pill {
    width: 34px;
    height: 34px;
    border-radius: 50%;
    background: #d6d6d6;
    color: #777;
    display: flex;
    align-items: center;
    justify-content: center;
}
.pill svg {
    width: 17px;
    height: 17px;
}
.pill.active {
    background: #5d5d5d;
    color: #eee;
}
.pill-dollar {
    margin-top: auto;
    font-size: 18px;
    font-weight: 600;
}
.pill-dollar + .pill {
    margin-top: 6px;
}
.rx-side {
    width: 220px;
    background: #f7f7f7;
    padding: 10px 11px 10px 10px;
    display: flex;
    flex-direction: column;
}
h3 {
    margin: 0;
    font-size: 13px;
    font-weight: 700;
    line-height: 18px;
    text-transform: uppercase;
    color: #3a4f68;
}
.rx-side h3 {
    padding-bottom: 3px;
    border-bottom: 2px solid #e6e6e6;
    margin-bottom: 8px;
    height: 22px;
}
.side-item + h3 {
    margin-top: 13px;
}
.side-item {
    display: flex;
    align-items: center;
    height: 27px;
    padding-left: 10px;
    font-size: 13px;
    color: #555;
}
.side-item svg:first-child {
    width: 14px;
    height: 13px;
    margin-right: 11px;
}
.side-item .check {
    width: 12px;
    height: 10px;
    margin-left: auto;
    margin-right: 10px;
    color: #1e6b41;
}
.side-item.picked {
    font-weight: 700;
}
.save {
    color: #3d6e52;
    font-weight: 600;
}
.save kbd {
    margin-left: auto;
    font-family: "DejaVu Sans Mono", monospace;
    font-size: 11.500px;
    font-weight: 400;
}
.sponsor-line {
    margin-top: auto;
    border-bottom: 2px solid #e6e6e6;
    height: 15px;
    position: relative;
}
.sponsor {
    position: absolute;
    left: 0;
    top: 0;
    width: 66px;
    height: 20px;
    border-radius: 3px;
    background: #4a7cbd;
    color: #fff;
    font-size: 11px;
    font-weight: 700;
    line-height: 20px;
    text-align: center;
}
.rx-main {
    width: 965px;
    background: #e9e9e9;
    padding: 11px 10px 10px 11px;
    display: flex;
    flex-direction: column;
}
.main-head {
    display: flex;
    justify-content: space-between;
    height: 20px;
    border-bottom: 2px solid #dcdcdc;
    align-items: flex-start;
}
.steps {
    background: #5b9079;
    color: #fff;
    font-size: 11.500px;
    height: 22px;
    line-height: 22px;
    padding: 0 5px;
    border-radius: 3px;
}
.regex-box {
    height: 37px;
    margin-top: 8px;
    background: #fff;
    border: 2px solid #ccc;
    border-radius: 3px;
    display: flex;
    align-items: center;
    padding: 0 10px;
    font-family: "DejaVu Sans Mono", monospace;
    font-size: 14px;
    color: #444;
    white-space: pre;
}
.rx-delim, .rx-pre, .rx-flags em, .tree em {
    color: #bbb;
    font-style: normal;
}
.rx-delim {
    margin-right: 2px;
}
.pipe {
    background: #7fb2f5;
    font-style: normal;
}
.rx-flags {
    margin-left: auto;
    display: flex;
    align-items: center;
    color: #79987f;
    gap: 3px;
    font-family: "DejaVu Sans Mono", monospace;
}
.rx-flags svg {
    width: 15px;
    height: 15px;
    color: #ccc;
}
.test-head {
    margin-top: 10px;
    height: 21px;
    padding-top: 0;
    border-bottom: 2px solid #dcdcdc;
}
.test-box {
    flex: 1;
    margin-top: 7px;
    background: #fff;
    border: 2px solid #ccc;
    border-radius: 3px;
    padding: 5px 4px;
    font-family: "DejaVu Sans Mono", monospace;
    font-size: 14px;
    line-height: 20px;
    color: #555;
}
.m1 {
    background: #bfe0ff;
}
.m2 {
    background: #6ebcff;
}
.rx-right {
    flex: 1;
    background: #f7f7f7;
    padding: 11px 11px 11px 12px;
    display: flex;
    flex-direction: column;
}
.card {
    background: #fdfdfd;
    padding: 0 10px;
    box-shadow: 0 0 2px #eee;
}
.card-expl { height: 292px; }
.card-match { height: 292px; margin-top: 11px; }
.card-quick { flex: 1; margin-top: 12px; }
.card-head {
    height: 31px;
    display: flex;
    align-items: flex-end;
    justify-content: space-between;
    border-bottom: 2px solid #ececec;
}
.card-head svg {
    width: 12px;
    height: 9px;
    color: #aaa;
    margin: 0 0 5px;
}
.tree {
    padding-top: 9px;
    font-size: 13px;
    line-height: 18px;
    color: #555;
}
.tree .mono, .tree mark {
    font-family: "DejaVu Sans Mono", monospace;
    font-size: 13px;
}
.tri {
    display: inline-block;
    width: 0;
    height: 0;
    border: 4px solid transparent;
    border-top: 7px solid #111;
    border-bottom: 0;
    margin-right: 7px;
    vertical-align: 1px;
}
.t-root {
    padding-left: 6px;
}
.t-root .tri {
    margin-right: 4px;
}
.t-root u {
    color: #79987f;
    text-decoration: none;
}
.t-a {
    padding-left: 26px;
    font-size: 14px;
}
.t-a b {
    font-weight: 600;
    color: #444;
}
.t-b {
    padding-left: 41px;
}
.tree mark {
    background: #f6dca0;
    color: #555;
    padding: 1px 0;
}
.flag {
    color: #6a2a97;
}
.first {
    color: #333;
}
.match {
    padding-top: 11px;
    height: 77px;
    border-bottom: 2px solid #f1f1f1;
}
.match + .match {
    padding-top: 9px;
    border-bottom: 0;
}
.match-title {
    display: flex;
    justify-content: space-between;
    align-items: center;
    font-family: "DejaVu Sans Mono", monospace;
    font-size: 13px;
    line-height: 20px;
    color: #6d90c4;
    height: 20px;
}
.match-title svg {
    width: 14px;
    height: 14px;
    color: #aaa;
    margin-right: 5px;
}
.match-row {
    display: flex;
    align-items: center;
    height: 28px;
    margin-top: 7px;
    font-family: "DejaVu Sans Mono", monospace;
    font-size: 13px;
}
.m-label {
    width: 81px;
    height: 20px;
    line-height: 20px;
    text-align: center;
    color: #444;
}
.m-pos {
    width: 43px;
    text-align: center;
    color: #888;
}
.m-val {
    flex: 1;
    height: 28px;
    line-height: 28px;
    background: #f5f5f5;
    padding-left: 11px;
    border-radius: 3px;
    color: #444;
}
.quick {
    display: flex;
    height: 243px;
    margin-top: 8px;
}
.quick-cats {
    width: 175px;
    font-size: 13px;
    color: #555;
}
.quick-search {
    height: 26px;
    border: 1px solid #bbb;
    border-radius: 2px;
    padding-left: 6px;
    line-height: 24px;
    color: #ccc;
    font-family: "DejaVu Sans Mono", monospace;
    font-size: 11.500px;
    margin-bottom: 6px;
}
.cat {
    height: 27px;
    display: flex;
    align-items: center;
    padding-left: 11px;
}
.cat svg:first-child {
    width: 13px;
    height: 14px;
    margin-right: 12px;
}
.cat.picked {
    font-weight: 700;
}
.cat .check {
    width: 12px;
    height: 10px;
    margin-left: 10px;
    color: #1e6b41;
}
.mini-bar {
    width: 15px;
    height: 243px;
    background: #f3f3f3;
    display: flex;
    flex-direction: column;
    align-items: center;
    color: #777;
    padding-top: 4px;
}
.mini-bar svg {
    width: 8px;
    height: 7px;
    flex: none;
}
.mini-bar span {
    align-self: stretch;
    background: #c8c8c8;
    margin-top: 4px;
}
.mini-bar .end {
    margin-top: auto;
    margin-bottom: 4px;
}
.mini-cats span {
    height: 171px;
}
.mini-list span {
    height: 80px;
}
.quick-list {
    flex: 1;
    height: 243px;
    margin-left: 6px;
    padding: 0 14px 0 15px;
    border-left: 1px solid #eee;
    font-size: 13px;
    color: #555;
}
.ref {
    height: 27px;
    display: flex;
    align-items: center;
    justify-content: space-between;
}
.ref code {
    font-family: "DejaVu Sans Mono", monospace;
    font-size: 12px;
    color: #3c7a5a;
}
```
